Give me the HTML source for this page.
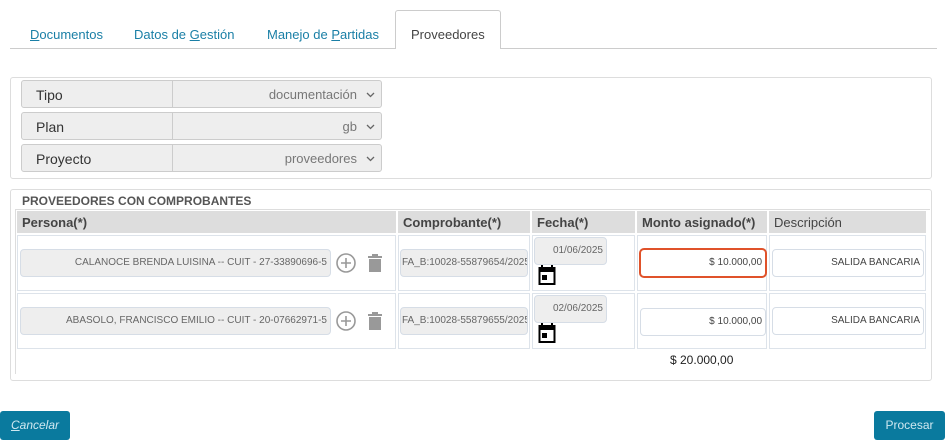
<!DOCTYPE html><html><head><style>
body{margin:0;width:945px;height:442px;background:#fff;font-family:"Liberation Sans",sans-serif;position:relative;overflow:hidden}
.a{position:absolute;box-sizing:border-box}
.tab{position:absolute;top:27px;font-size:13px;color:#1a7fa6}
.sel{background:#eee;border:1px solid #ccc;border-radius:3px;height:28px;width:361px;left:21px}
.sel .l{position:absolute;left:14px;top:6px;font-size:14px;color:#333}
.sel .d{position:absolute;left:150px;top:0;bottom:0;border-left:1px solid #ccc}
.sel .v{position:absolute;right:24px;top:6px;font-size:13px;color:#777}
.sel svg{position:absolute;right:6px;top:11px}
.th{background:#ddd;height:22px;top:211px;font-size:13px;color:#444;font-weight:bold;padding:4px 5px;white-space:nowrap}
.td{border:1px solid #dde3ea}
.in{border:1px solid #d6dde6;border-radius:4px;font-size:10px;color:#666;text-align:right;padding-right:3px;line-height:26px;height:28px;white-space:nowrap;overflow:hidden}
.dis{background:#eee}
.btn{background:#0a7a9e;color:#cfe8f0;font-size:12px;border-radius:3px;height:29px;top:411px;line-height:29px;text-align:center}
</style></head><body>
<div class="a" style="left:10px;top:48px;width:927px;border-top:1px solid #ccc"></div>
<div class="a" style="left:395px;top:10px;width:106px;height:39px;border:1px solid #ccc;border-bottom:none;background:#fff;border-radius:3px 3px 0 0"></div>
<span class="tab" style="left:30px"><u>D</u>ocumentos</span>
<span class="tab" style="left:134px">Datos de <u>G</u>estión</span>
<span class="tab" style="left:267px">Manejo de <u>P</u>artidas</span>
<span class="tab" style="left:411px;color:#444">Proveedores</span>

<div class="a" style="left:10px;top:77px;width:922px;height:102px;border:1px solid #ddd;border-radius:3px"></div>
<div class="a sel" style="top:80px"><span class="l">Tipo</span><span class="d"></span><span class="v">documentación</span><svg width="9" height="6"><path d="M1 1l3.5 3.5L8 1" fill="none" stroke="#666" stroke-width="1.3"/></svg></div>
<div class="a sel" style="top:112px"><span class="l">Plan</span><span class="d"></span><span class="v">gb</span><svg width="9" height="6"><path d="M1 1l3.5 3.5L8 1" fill="none" stroke="#666" stroke-width="1.3"/></svg></div>
<div class="a sel" style="top:144px"><span class="l">Proyecto</span><span class="d"></span><span class="v">proveedores</span><svg width="9" height="6"><path d="M1 1l3.5 3.5L8 1" fill="none" stroke="#666" stroke-width="1.3"/></svg></div>

<div class="a" style="left:10px;top:189px;width:922px;height:192px;border:1px solid #ddd;border-radius:3px"></div>
<div class="a" style="left:22px;top:194px;font-size:12px;font-weight:bold;color:#555">PROVEEDORES CON COMPROBANTES</div>
<div class="a" style="left:15px;top:209px;width:915px;height:165px;border-left:1px solid #ddd;border-top:1px solid #ddd"></div>
<div class="a th" style="left:17px;width:379px">Persona(*)</div>
<div class="a th" style="left:398px;width:132px">Comprobante(*)</div>
<div class="a th" style="left:532px;width:103px">Fecha(*)</div>
<div class="a th" style="left:637px;width:130px">Monto asignado(*)</div>
<div class="a th" style="left:769px;width:157px;font-weight:normal">Descripción</div>

<div class="a td" style="left:17px;top:235px;width:379px;height:56px"></div>
<div class="a td" style="left:398px;top:235px;width:132px;height:56px"></div>
<div class="a td" style="left:532px;top:235px;width:103px;height:56px"></div>
<div class="a td" style="left:637px;top:235px;width:130px;height:56px"></div>
<div class="a td" style="left:769px;top:235px;width:157px;height:56px"></div>
<div class="a td" style="left:17px;top:293px;width:379px;height:56px"></div>
<div class="a td" style="left:398px;top:293px;width:132px;height:56px"></div>
<div class="a td" style="left:532px;top:293px;width:103px;height:56px"></div>
<div class="a td" style="left:637px;top:293px;width:130px;height:56px"></div>
<div class="a td" style="left:769px;top:293px;width:157px;height:56px"></div>

<div class="a in dis" style="left:20px;top:249px;width:311px">CALANOCE BRENDA LUISINA -- CUIT - 27-33890696-5</div>
<div class="a in dis" style="left:20px;top:307px;width:311px">ABASOLO, FRANCISCO EMILIO -- CUIT - 20-07662971-5</div>
<svg class="a" style="left:335px;top:252px" width="22" height="22"><circle cx="11" cy="11" r="9" fill="none" stroke="#999" stroke-width="1.6"/><path d="M11 6v10M6 11h10" stroke="#999" stroke-width="1.6"/></svg>
<svg class="a" style="left:335px;top:310px" width="22" height="22"><circle cx="11" cy="11" r="9" fill="none" stroke="#999" stroke-width="1.6"/><path d="M11 6v10M6 11h10" stroke="#999" stroke-width="1.6"/></svg>
<svg class="a" style="left:367px;top:253px" width="16" height="20"><path d="M1 3h14v2H1zM5 1h6v2H5zM2 6h12v13H2z" fill="#999"/></svg>
<svg class="a" style="left:367px;top:311px" width="16" height="20"><path d="M1 3h14v2H1zM5 1h6v2H5zM2 6h12v13H2z" fill="#999"/></svg>

<div class="a in dis" style="left:400px;top:249px;width:128px;text-align:left;padding-left:1px">FA_B:10028-55879654/2025</div>
<div class="a in dis" style="left:400px;top:307px;width:128px;text-align:left;padding-left:1px">FA_B:10028-55879655/2025</div>
<div class="a in dis" style="left:534px;top:237px;width:73px">01/06/2025</div>
<div class="a in dis" style="left:534px;top:295px;width:73px">02/06/2025</div>
<svg class="a" style="left:538px;top:265px" width="18" height="21"><path d="M4 0v3M14 0v3" stroke="#000" stroke-width="2"/><rect x="1.5" y="3" width="15" height="16" fill="none" stroke="#000" stroke-width="2"/><rect x="1" y="3" width="16" height="4" fill="#000"/><rect x="4" y="10" width="5" height="5" fill="#000"/></svg>
<svg class="a" style="left:538px;top:323px" width="18" height="21"><path d="M4 0v3M14 0v3" stroke="#000" stroke-width="2"/><rect x="1.5" y="3" width="15" height="16" fill="none" stroke="#000" stroke-width="2"/><rect x="1" y="3" width="16" height="4" fill="#000"/><rect x="4" y="10" width="5" height="5" fill="#000"/></svg>

<div class="a in" style="left:639px;top:248px;width:128px;height:30px;border:2px solid #e0522a;border-radius:5px;color:#444">$ 10.000,00</div>
<div class="a in" style="left:640px;top:308px;width:126px;color:#444">$ 10.000,00</div>
<div class="a in" style="left:772px;top:249px;width:152px;color:#444">SALIDA BANCARIA</div>
<div class="a in" style="left:772px;top:307px;width:152px;color:#444">SALIDA BANCARIA</div>
<div class="a" style="left:670px;top:353px;font-size:12px;color:#222">$ 20.000,00</div>

<div class="a btn" style="left:0;width:70px;font-style:italic"><u>C</u>ancelar</div>
<div class="a btn" style="left:874px;width:71px">Procesar</div>
</body></html>
